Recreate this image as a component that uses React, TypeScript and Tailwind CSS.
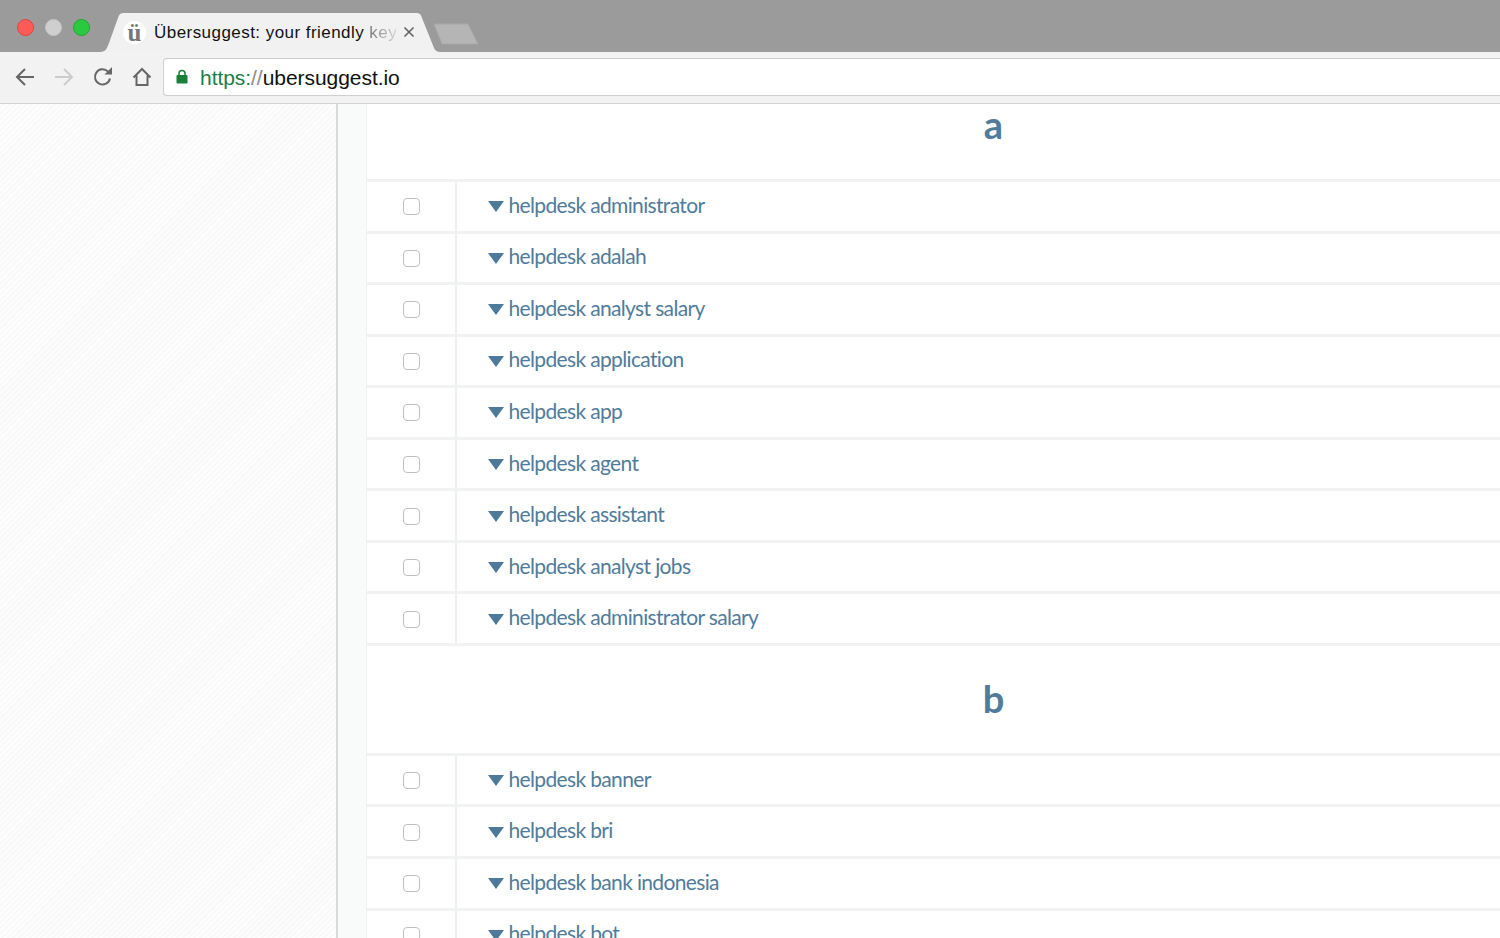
const groupA = [
  "helpdesk administrator",
  "helpdesk adalah",
  "helpdesk analyst salary",
  "helpdesk application",
  "helpdesk app",
  "helpdesk agent",
  "helpdesk assistant",
  "helpdesk analyst jobs",
  "helpdesk administrator salary",
];
const groupB = ["helpdesk banner", "helpdesk bri", "helpdesk bank indonesia", "helpdesk bot"];

function Row({ label }: { label: string }) {
  return (
    <div className="flex h-[51.56px] shrink-0 border-b-[3px] border-[#f1f3f3]">
      <div className="flex w-[88px] shrink-0 items-center justify-center pt-[1px]">
        <span className="block h-[17px] w-[17px] rounded-[4px] border border-[#bfc1c1] bg-white" />
      </div>
      <div className="flex flex-1 items-center border-l-[2px] border-[#eef0f0] pl-[31px]">
        <svg width="16" height="11" viewBox="0 0 16 11" className="mt-[1px] shrink-0">
          <path d="M0 0H16L8 11Z" fill="#4c7a9b" />
        </svg>
        <span className="mb-[3px] ml-[4.5px] font-['Lato',sans-serif] text-[21px] leading-[24px] tracking-[-0.65px] text-[#4f7c9c]">
          {label}
        </span>
      </div>
    </div>
  );
}

export default function App() {
  return (
    <div className="flex h-[938px] w-[1500px] flex-col overflow-hidden bg-white font-['Liberation_Sans',sans-serif]">
      {/* tab strip */}
      <div className="relative flex h-[52px] shrink-0 items-center bg-[#9b9b9b]">
        <div className="flex gap-[11px] pt-[3px] pl-[17px]">
          <span className="block h-[17px] w-[17px] rounded-full border border-[#e0443e] bg-[#fc5b57]" />
          <span className="block h-[17px] w-[17px] rounded-full border border-[#c4c4c4] bg-[#cfcfcf]" />
          <span className="block h-[17px] w-[17px] rounded-full border border-[#1eaa2e] bg-[#2ac940]" />
        </div>
        <svg width="340" height="40" viewBox="0 0 340 40" className="absolute bottom-0 left-[100px]">
          <path d="M0 40 C6 40 7 36 9 31 L18 6 C19 2 21 1 24 1 H316 C319 1 321 2 322 6 L332 31 C334 36 335 40 340 40 Z" fill="#f1f1f1" />
        </svg>
        <svg width="46" height="22" viewBox="0 0 46 22" className="absolute bottom-[7px] left-[433px]">
          <path d="M1 1 H35 L45 21 H9 Z" fill="#b5b5b5" stroke="#a8a8a8" />
        </svg>
        <div className="absolute left-[123px] top-[21px] flex h-[23px] w-[23px] items-center justify-center rounded-full bg-white">
          <span className="font-['Liberation_Serif',serif] text-[25px] font-bold leading-[23px] text-[#777777]">ü</span>
        </div>
        <div className="absolute left-[154px] top-[22px] w-[242px] overflow-hidden whitespace-nowrap text-[17px] leading-[21px] tracking-[0.45px] text-[#111111]">
          Übersuggest: your friendly{" "}
          <span className="bg-linear-to-r from-[#777777] to-[#d8d8d8] bg-clip-text text-transparent">key</span>
        </div>
        <svg width="12" height="12" viewBox="0 0 12 12" className="absolute left-[403px] top-[26px]">
          <path d="M1.5 1.5 10.5 10.5M10.5 1.5 1.5 10.5" stroke="#5f5f5f" strokeWidth="1.5" />
        </svg>
      </div>

      {/* toolbar */}
      <div className="flex h-[52px] shrink-0 items-center border-b border-[#d4d4d4] bg-[#f2f2f2] pb-[1px]">
        <div className="flex w-[163px] shrink-0 items-center pl-[15px]">
          <svg width="20" height="20" viewBox="0 0 20 20" className="shrink-0">
            <path d="M19 10H2M10 2 2 10l8 8" fill="none" stroke="#666666" strokeWidth="2" />
          </svg>
          <svg width="20" height="20" viewBox="0 0 20 20" className="ml-[19px] shrink-0">
            <path d="M1 10H18M10 2l8 8-8 8" fill="none" stroke="#cccccc" strokeWidth="2" />
          </svg>
          <svg width="20" height="20" viewBox="0 0 20 20" className="ml-[19px] shrink-0">
            <path d="M17 11.5A7.6 7.6 0 1 1 15 4.6" fill="none" stroke="#666666" strokeWidth="2" />
            <path d="M11.5 7.5H19V0Z" fill="#666666" />
          </svg>
          <svg width="20" height="20" viewBox="0 0 20 20" className="ml-[19px] shrink-0">
            <path d="M1.5 10.5 10 2l8.500 8.500M4.500 8.500V18H15.500V8.500" fill="none" stroke="#666666" strokeWidth="2" />
          </svg>
        </div>
        <div className="flex h-[38px] flex-1 items-center rounded-l-[4px] border border-r-0 border-[#cfcfcf] bg-white pl-[12px]">
          <svg width="12" height="15" viewBox="0 0 12 15" className="mb-[2px] shrink-0">
            <path d="M3 7V4.500a3 3 0 0 1 6 0V7" fill="none" stroke="#188038" strokeWidth="1.500" />
            <rect x="0.500" y="6" width="11" height="8.500" rx="1" fill="#188038" />
          </svg>
          <span className="ml-[12px] text-[21px] leading-none tracking-[-0.05px] text-[#111111]">
            <span className="text-[#1c8043]">https:</span>
            <span className="text-[#8a8a8a]">//</span>ubersuggest.io
          </span>
        </div>
      </div>

      {/* page */}
      <div className="flex min-h-0 flex-1 overflow-hidden">
        <div className="w-[336px] shrink-0 bg-[#fbfbfb] bg-[repeating-linear-gradient(135deg,#fdfdfd_0px,#fdfdfd_2px,#f9f9f9_2px,#f9f9f9_4px)]" />
        <div className="flex w-[30px] shrink-0 border-l-2 border-[#d9d9d9] bg-[#f9fafa]" />
        <div className="flex min-w-0 flex-1 flex-col overflow-hidden border-l border-[#eef2f5] bg-white">
          <div className="flex h-[78px] shrink-0 justify-center border-b-[3px] border-[#f1f3f3] pl-[120px]">
            <span className="font-['Lato',sans-serif] text-[38px] font-bold leading-[40px] text-[#4f7c9c]">a</span>
          </div>
          {groupA.map((k) => (
            <Row key={k} label={k} />
          ))}
          <div className="flex h-[110px] shrink-0 items-center justify-center border-b-[3px] border-[#f1f3f3] pb-[2px] pl-[120px]">
            <span className="font-['Lato',sans-serif] text-[38px] font-bold leading-none text-[#4f7c9c]">b</span>
          </div>
          {groupB.map((k) => (
            <Row key={k} label={k} />
          ))}
        </div>
      </div>
    </div>
  );
}
